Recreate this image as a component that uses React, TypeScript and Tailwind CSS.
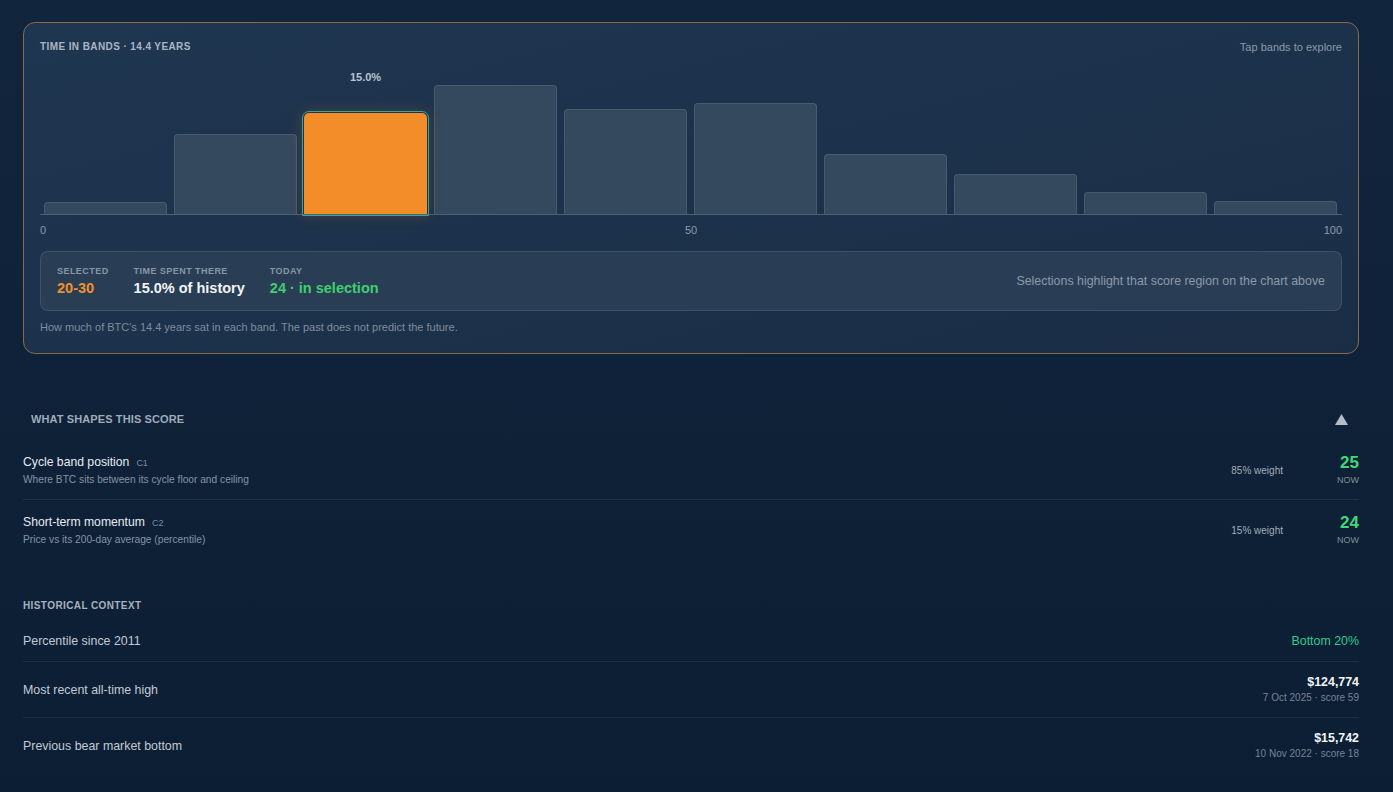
import React from "react";

const bands = [
  { range: "0-10", pct: 1.8 },
  { range: "10-20", pct: 11.8 },
  { range: "20-30", pct: 15.0 },
  { range: "30-40", pct: 19.0 },
  { range: "40-50", pct: 15.4 },
  { range: "50-60", pct: 16.3 },
  { range: "60-70", pct: 8.8 },
  { range: "70-80", pct: 5.9 },
  { range: "80-90", pct: 3.2 },
  { range: "90-100", pct: 1.9 },
];

const PX_PER_PCT = 6.8;
const SELECTED = 2;

const factors = [
  {
    title: "Cycle band position",
    code: "C1",
    sub: "Where BTC sits between its cycle floor and ceiling",
    weight: "85% weight",
    value: "25",
  },
  {
    title: "Short-term momentum",
    code: "C2",
    sub: "Price vs its 200-day average (percentile)",
    weight: "15% weight",
    value: "24",
  },
];

function BandChart() {
  return (
    <div className="relative mt-[10px] flex h-[152px] items-end gap-[7px] border-b border-[#4a6179] px-[4px]">
      {bands.map((b, i) => {
        const h = Math.round(b.pct * PX_PER_PCT);
        if (i === SELECTED) {
          return (
            <div key={b.range} className="relative -mx-[2px] -mb-[2px] w-[127px]">
              <div
                className="absolute left-0 right-0 text-center text-[11px] font-bold leading-[14px] text-[#b8c3cf]"
                style={{ bottom: h + 30 }}
              >
                {b.pct.toFixed(1)}%
              </div>
              <div className="rounded-t-[7px] border border-[#3da58a] p-[1px] shadow-[0_0_14px_rgba(242,140,40,0.18)]">
                <div
                  className="rounded-t-[5px] bg-[#f28d29]"
                  style={{ height: h - 1 }}
                />
              </div>
            </div>
          );
        }
        return (
          <div
            key={b.range}
            className="w-[123px] rounded-t-[4px] border-x border-t border-white/10 bg-[#34485e]"
            style={{ height: h }}
          />
        );
      })}
    </div>
  );
}

export default function App() {
  return (
    <div className="min-h-screen w-full bg-gradient-to-b from-[#11253d] to-[#0c1e33] font-['Liberation_Sans',Arial,sans-serif]">
      <div className="ml-[23px] w-[1336px] pt-[22px] pb-6">
        {/* Time in bands card */}
        <section className="rounded-[12px] border border-[#87694b] bg-gradient-to-br from-[#1f3651] to-[#1a2d45] px-4 pt-[18px] pb-[19px]">
          <div className="flex h-[12px] items-center justify-between">
            <span className="text-[10px] font-bold uppercase leading-[12px] tracking-[0.04em] text-[#a9b5c3]">
              Time in bands · 14.4 years
            </span>
            <span className="text-[11px] leading-[12px] text-[#8b9aab]">
              Tap bands to explore
            </span>
          </div>

          <BandChart />

          <div className="mt-[8px] grid grid-cols-3 text-[11px] leading-[14px] text-[#8c9bab]">
            <span>0</span>
            <span className="text-center">50</span>
            <span className="text-right">100</span>
          </div>

          <div className="mt-[14px] flex h-[60px] items-center justify-between rounded-[8px] border border-white/10 bg-[#293e55] px-4">
            <div className="flex gap-[25px]">
              <div className="flex flex-col gap-[3px]">
                <span className="text-[9px] font-bold uppercase leading-[11px] tracking-[0.05em] text-[#8896a6]">
                  Selected
                </span>
                <span className="text-[14.5px] font-bold leading-[17px] text-[#f0902c]">
                  20-30
                </span>
              </div>
              <div className="flex flex-col gap-[3px]">
                <span className="text-[9px] font-bold uppercase leading-[11px] tracking-[0.05em] text-[#8896a6]">
                  Time spent there
                </span>
                <span className="text-[14.5px] font-bold leading-[17px] text-[#f2f5f8]">
                  15.0% of history
                </span>
              </div>
              <div className="flex flex-col gap-[3px]">
                <span className="text-[9px] font-bold uppercase leading-[11px] tracking-[0.05em] text-[#8896a6]">
                  Today
                </span>
                <span className="text-[14.5px] font-bold leading-[17px] text-[#3fcf6f]">
                  24 · in selection
                </span>
              </div>
            </div>
            <span className="text-[12.4px] text-[#8b99a9]">
              Selections highlight that score region on the chart above
            </span>
          </div>

          <p className="mt-[10px] text-[11px] leading-[13px] text-[#7e8d9e]">
            How much of BTC's 14.4 years sat in each band. The past does not
            predict the future.
          </p>
        </section>

        {/* What shapes this score */}
        <section className="mt-[44px]">
          <button className="flex h-[42px] w-full items-center justify-between px-2">
            <span className="text-[11px] font-bold uppercase tracking-[0.01em] text-[#9eabba]">
              What shapes this score
            </span>
            <svg width="13" height="11" viewBox="0 0 13 11" className="mr-[3px]">
              <polygon points="6.5,0 13,11 0,11" fill="#b3bdc8" />
            </svg>
          </button>
          <div className="divide-y divide-white/[0.07]">
            {factors.map((f) => (
              <div key={f.code} className="flex items-center justify-between pt-[14px] pb-[13px]">
                <div className="flex flex-col">
                  <div className="flex items-baseline">
                    <span className="text-[12.2px] leading-[16px] text-[#e6ebf1]">
                      {f.title}
                    </span>
                    <span className="ml-[7px] text-[9px] text-[#7e8c9b]">{f.code}</span>
                  </div>
                  <span className="mt-[3px] text-[10.2px] leading-[12px] text-[#8494a5]">
                    {f.sub}
                  </span>
                </div>
                <div className="flex items-center gap-[36px]">
                  <span className="text-[10px] text-[#a1adb9]">{f.weight}</span>
                  <div className="flex w-[40px] flex-col items-end">
                    <span className="text-[17px] font-bold leading-[18px] text-[#3fd977]">
                      {f.value}
                    </span>
                    <span className="mt-[2px] text-[9px] leading-[12px] text-[#7f8d9c]">
                      NOW
                    </span>
                  </div>
                </div>
              </div>
            ))}
          </div>
        </section>

        {/* Historical context */}
        <section className="mt-[40px]">
          <h3 className="mb-[8px] text-[10px] font-bold uppercase leading-[14px] tracking-[0.04em] text-[#a6b2bf]">
            Historical context
          </h3>
          <div className="divide-y divide-white/[0.07]">
            <div className="flex items-center justify-between py-[12px]">
              <span className="text-[12.4px] leading-[16px] text-[#c2cbd5]">
                Percentile since 2011
              </span>
              <span className="text-[12.4px] leading-[16px] text-[#2fca8c]">
                Bottom 20%
              </span>
            </div>
            <div className="flex items-center justify-between py-[12px]">
              <span className="text-[12.4px] leading-[16px] text-[#c2cbd5]">
                Most recent all-time high
              </span>
              <div className="flex flex-col items-end">
                <span className="text-[12.4px] font-bold leading-[16px] text-[#f3f6f9]">
                  $124,774
                </span>
                <span className="mt-[1px] text-[10px] leading-[14px] text-[#758497]">
                  7 Oct 2025 · score 59
                </span>
              </div>
            </div>
            <div className="flex items-center justify-between py-[12px]">
              <span className="text-[12.4px] leading-[16px] text-[#c2cbd5]">
                Previous bear market bottom
              </span>
              <div className="flex flex-col items-end">
                <span className="text-[12.4px] font-bold leading-[16px] text-[#f3f6f9]">
                  $15,742
                </span>
                <span className="mt-[1px] text-[10px] leading-[14px] text-[#758497]">
                  10 Nov 2022 · score 18
                </span>
              </div>
            </div>
          </div>
        </section>
      </div>
    </div>
  );
}
